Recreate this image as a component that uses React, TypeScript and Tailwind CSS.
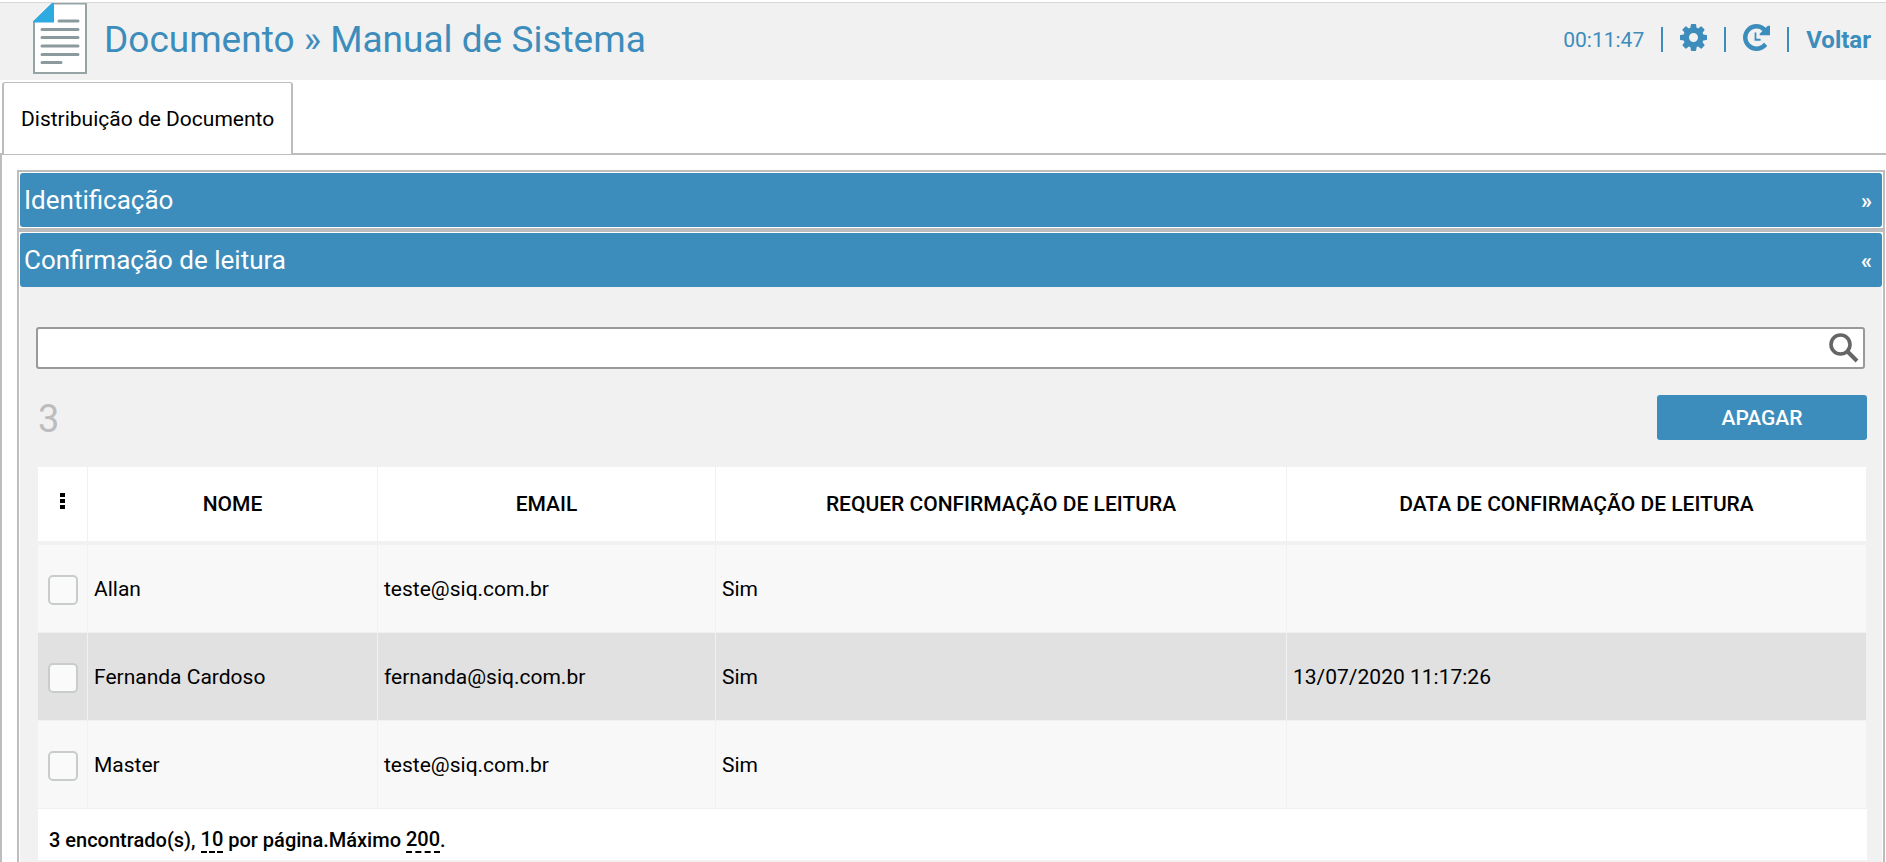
import { useState } from "react";

const users = [
  { name: "Allan", email: "teste@siq.com.br", required: "Sim", date: "" },
  { name: "Fernanda Cardoso", email: "fernanda@siq.com.br", required: "Sim", date: "13/07/2020 11:17:26" },
  { name: "Master", email: "teste@siq.com.br", required: "Sim", date: "" },
];

function DocumentIcon() {
  return (
    <svg width="54" height="71" viewBox="0 0 54 71" aria-hidden="true">
      <path d="M1 19V70H53V0.500H20Z" fill="#fff" stroke="#95a5a5" strokeWidth="2" />
      <path d="M19 0H21V19.500H0V18.500Z" fill="#2daae2" />
      <path
        d="M26 18H45M9 26.500H45M9 34.500H45M9 43H45M9 51.500H45M9 59.500H28"
        stroke="#8b9a9c"
        strokeWidth="3"
        strokeLinecap="round"
      />
    </svg>
  );
}

function GearIcon() {
  return (
    <svg width="27" height="27" viewBox="0 0 1536 1536" fill="currentColor" aria-hidden="true">
      <path d="M1024 768q0-106-75-181t-181-75-181 75-75 181 75 181 181 75 181-75 75-181zm512-109v222q0 12-8 23t-20 13l-185 28q-19 54-39 91 35 50 107 138 10 12 10 25t-9 23q-27 37-99 108t-94 71q-12 0-26-9l-138-108q-44 23-91 38-16 136-29 186-7 28-36 28H657q-14 0-24.500-8.500T621 1506l-28-184q-49-16-90-37l-141 107q-10 9-25 9-14 0-25-11-126-114-165-168-7-10-7-23 0-12 8-23 15-21 51-66.500t54-70.500q-27-50-41-99L29 913q-13-2-21-12.500T0 877V655q0-12 8-23t19-13l186-28q14-46 39-92-40-57-107-138-10-12-10-24 0-10 9-23 26-36 98.500-107.500T337 135q13 0 26 10l138 107q44-23 91-38 16-136 29-186 7-28 36-28h222q14 0 24.500 8.500T915 30l28 184q49 16 90 37l142-107q9-9 24-9 13 0 25 10 129 119 165 170 7 8 7 22 0 12-8 23-15 21-51 66.500t-54 70.500q26 50 41 98l183 28q13 2 21 12.500t8 23.500z" />
    </svg>
  );
}

function SessionIcon() {
  return (
    <svg width="27" height="27" viewBox="0 0 1536 1536" fill="currentColor" aria-hidden="true">
      <path d="M1536 100V640H950V550L1106 393Q969 256 768 256q-104 0-198.500 40.500T406 406 296.500 569.500 256 768t40.500 198.500T406 1130t163.500 109.500T768 1280q119 0 225-52t179-147q7-10 23-12 15 0 25 9l137 138q9 8 9.500 20.500t-7.500 22.500q-109 132-264 204.500T768 1536q-156 0-298-61t-245-164-164-245T0 768t61-298 164-245T470 61 768 0q147 0 284.500 55.500T1297 212L1410 100Z" />
      <path d="M660 480H760V840H1000V950H660Z" />
    </svg>
  );
}

function SearchIcon() {
  return (
    <svg width="30" height="30" viewBox="0 0 30 30" fill="none" stroke="#666" aria-hidden="true">
      <circle cx="11.500" cy="11.500" r="9.500" strokeWidth="3.600" />
      <path d="M18.500 18.500L28 28" strokeWidth="4" />
    </svg>
  );
}

function SectionBar({ title, open, onToggle }: { title: string; open: boolean; onToggle: () => void }) {
  return (
    <h2 className="border border-white">
      <button
        type="button"
        aria-expanded={open}
        onClick={onToggle}
        className="flex h-[54px] w-full items-center justify-between rounded-[3px] bg-[#3c8dbc] pl-1 pr-2.5 text-white"
      >
        <span className="text-[26px]">{title}</span>
        <span className="text-[22px] font-bold">{open ? "«" : "»"}</span>
      </button>
    </h2>
  );
}

const head = "border-r border-[#f1f1f1] px-1.5 pt-0.5 text-center font-medium last:border-r-0";
const cell = "border-r border-t border-[#f1f1f1] px-1.5 pt-0.5 last:border-r-0";

export default function App() {
  const [identOpen, setIdentOpen] = useState(false);
  const [readOpen, setReadOpen] = useState(true);

  return (
    <div className="min-h-screen bg-white pt-0.5 font-['Roboto',sans-serif] text-[21px] text-black">
      <header className="flex h-[78px] items-center justify-between border-t border-[#d8d8d8] bg-[#f1f1f1] pl-[33px] pr-[15px] text-[#3c8dbc]">
        <div className="flex items-center gap-[17px] pb-1.5">
          <DocumentIcon />
          <h1 className="pt-0.5 text-[37px] leading-none">Documento » Manual de Sistema</h1>
        </div>
        <div className="flex items-center gap-[17px] pb-1">
          <span className="pt-0.5 text-[21px]">00:11:47</span>
          <span className="h-[25px] w-0.5 bg-[#3c8dbc]" />
          <button type="button" aria-label="Configurações" className="pb-1">
            <GearIcon />
          </button>
          <span className="h-[25px] w-0.5 bg-[#3c8dbc]" />
          <button type="button" aria-label="Renovar sessão" className="pb-1">
            <SessionIcon />
          </button>
          <span className="h-[25px] w-0.5 bg-[#3c8dbc]" />
          <a href="#voltar" className="text-[24px] font-bold">
            Voltar
          </a>
        </div>
      </header>

      <nav className="flex border-b-2 border-[#bdbdbd] pl-0.5 pt-0.5">
        <a
          href="#distribuicao"
          className="-mb-0.5 flex h-[73px] items-center rounded-t-[3px] border-x-2 border-b border-t border-[#bdbdbd] bg-white px-[17px] pt-0.5"
        >
          Distribuição de Documento
        </a>
      </nav>

      <main className="border-l-2 border-[#bdbdbd] pl-[15px] pr-px pt-[15px]">
        <div className="border-x-2 border-t-2 border-[#bdbdbd]">
          <SectionBar title="Identificação" open={identOpen} onToggle={() => setIdentOpen(!identOpen)} />
          <div className="h-1 bg-[#bdbdbd]" />
          <SectionBar title="Confirmação de leitura" open={readOpen} onToggle={() => setReadOpen(!readOpen)} />
          {readOpen && (
            <div className="mx-px -mt-px bg-[#f1f1f1] pb-4 pl-4 pr-[15px] pt-10">
              <div className="mr-0.5 flex h-[42px] items-center rounded-[3px] border-2 border-[#999] bg-white pr-1">
                <input type="search" aria-label="Pesquisar" className="h-full min-w-0 flex-1 px-2 outline-none" />
                <button type="button" aria-label="Buscar">
                  <SearchIcon />
                </button>
              </div>

              <div className="mt-[26px] flex items-center justify-between pl-0.5">
                <span className="pt-0.5 text-[38px] leading-none text-[#bdbdbd]">3</span>
                <button type="button" className="h-[45px] w-[210px] rounded-[3px] bg-[#3c8dbc] pt-0.5 font-medium text-white">
                  APAGAR
                </button>
              </div>

              <div className="mt-[27px] pl-0.5">
                <div className="pr-px">
                  <table className="w-full table-fixed border-separate border-spacing-0">
                    <colgroup>
                      <col className="w-[50px]" />
                      <col className="w-[290px]" />
                      <col className="w-[338px]" />
                      <col className="w-[571px]" />
                      <col />
                    </colgroup>
                    <thead>
                      <tr className="h-[74px] bg-white">
                        <th className={head}>
                          <button type="button" aria-label="Opções" className="mb-2 flex w-full flex-col items-center gap-0.5">
                            <span className="h-1 w-[5px] bg-black" />
                            <span className="h-1 w-[5px] bg-black" />
                            <span className="h-1 w-[5px] bg-black" />
                          </button>
                        </th>
                        <th className={head}>NOME</th>
                        <th className={head}>EMAIL</th>
                        <th className={head}>REQUER CONFIRMAÇÃO DE LEITURA</th>
                        <th className={head}>DATA DE CONFIRMAÇÃO DE LEITURA</th>
                      </tr>
                    </thead>
                    <tbody>
                      <tr className="h-[3px]">
                        <td colSpan={5} className="p-0" />
                      </tr>
                      {users.map((user) => (
                        <tr key={user.name} className="h-[88px] odd:bg-[#e1e1e1] even:bg-[#f8f8f8]">
                          <td className={cell}>
                            <input
                              type="checkbox"
                              aria-label={`Selecionar ${user.name}`}
                              className="mx-auto block size-[30px] appearance-none rounded-[5px] border-2 border-[#c8cccc] bg-[#fafafa] checked:bg-[#3c8dbc]"
                            />
                          </td>
                          <td className={cell}>{user.name}</td>
                          <td className={cell}>{user.email}</td>
                          <td className={cell}>{user.required}</td>
                          <td className={cell}>{user.date}</td>
                        </tr>
                      ))}
                    </tbody>
                  </table>
                </div>
                <div className="mt-px flex h-[51px] items-center whitespace-pre bg-white pl-[11px] pt-2.5 text-[20px] font-medium">
                  3 encontrado(s), <button type="button" className="border-b-2 border-dashed border-black leading-6">10</button> por página.Máximo{" "}
                  <button type="button" className="border-b-2 border-dashed border-black leading-6">200</button>.
                </div>
              </div>
            </div>
          )}
        </div>
      </main>
    </div>
  );
}
